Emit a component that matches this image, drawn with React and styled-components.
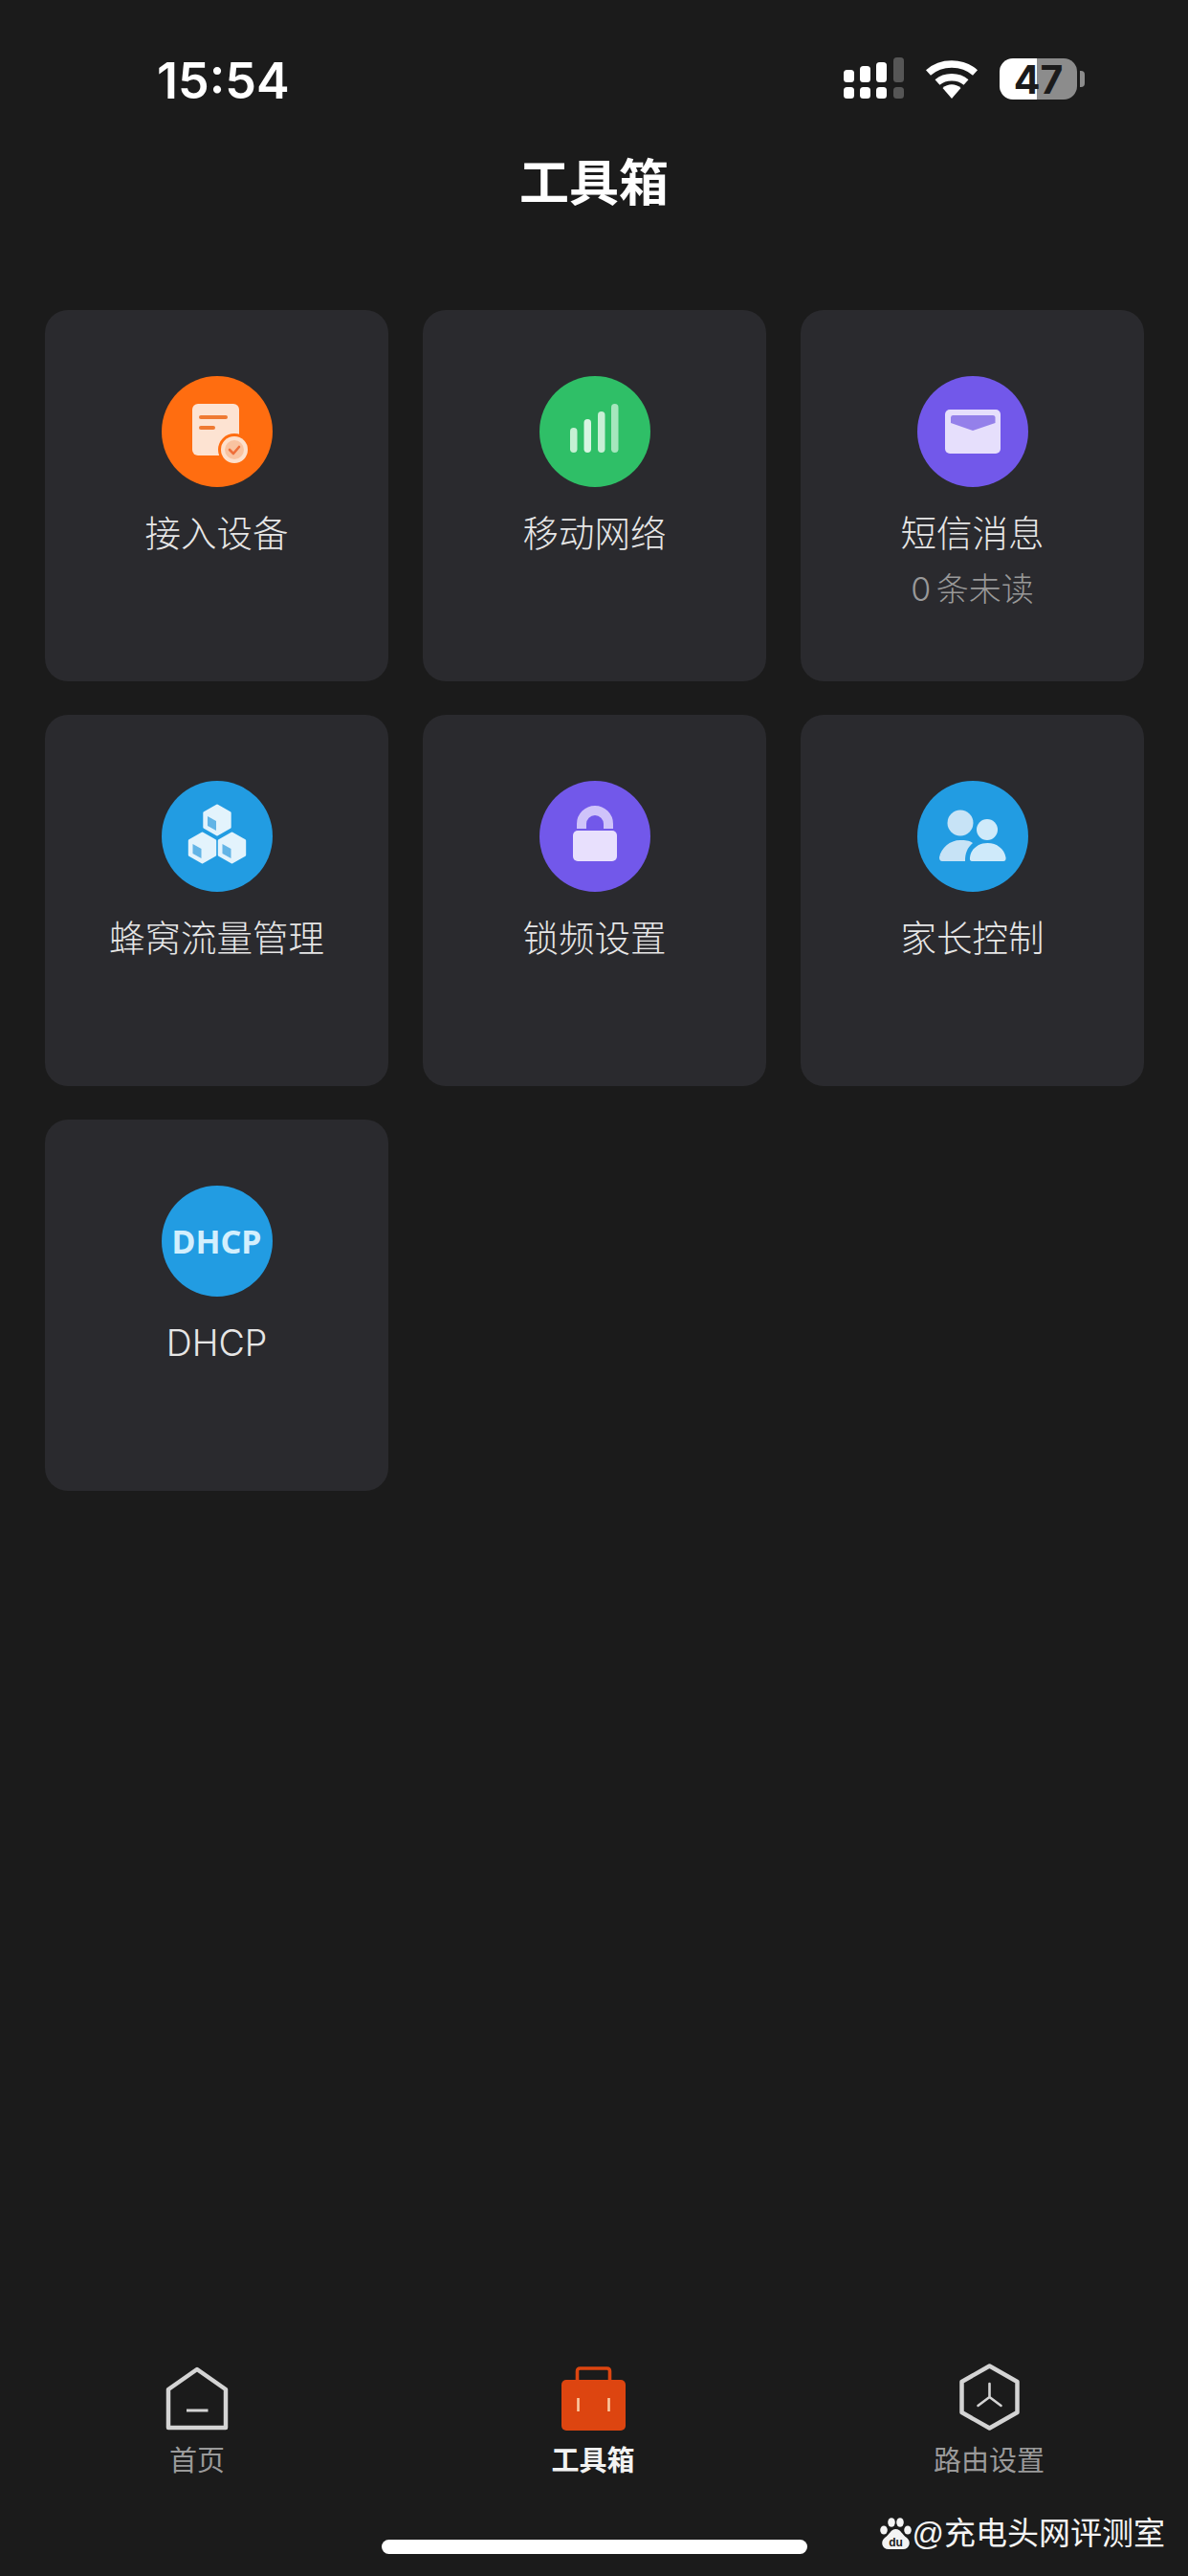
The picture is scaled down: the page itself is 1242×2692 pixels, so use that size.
import styled, { createGlobalStyle } from "styled-components";

const GlobalStyle = createGlobalStyle`
  html, body {
    margin: 0;
    padding: 0;
    background: #1b1b1b;
  }
`;

const FONT = `"Liberation Sans", "Noto Sans CJK SC", sans-serif`;

const Page = styled.div`
  position: relative;
  width: 1242px;
  height: 2692px;
  overflow: hidden;
  display: flex;
  flex-direction: column;
  background: #1b1b1b;
  font-family: ${FONT};
`;

const StatusBar = styled.div`
  display: flex;
  align-items: center;
  justify-content: space-between;
  height: 84px;
  margin-top: 42px;
  padding: 0 108px 0 164px;
`;

const Clock = styled.div`
  font-family: Inter, sans-serif;
  font-size: 52px;
  font-weight: 600;
  color: #fff;
`;

const StatusIcons = styled.div`
  display: flex;
  align-items: center;
  gap: 22px;
  margin-top: -3px;
`;

const Battery = styled.div`
  display: flex;
  align-items: center;
  justify-content: center;
  width: 81px;
  height: 43px;
  border-radius: 14px;
  background: linear-gradient(90deg, #fff 48%, #8c8c8c 48%);
  font-family: Inter, sans-serif;
  font-size: 41px;
  font-weight: 700;
  color: #1b1b1b;
`;

const BatteryWrap = styled.div`
  display: flex;
  align-items: center;
  gap: 3px;
`;

const BatteryNub = styled.div`
  width: 5px;
  height: 17px;
  border-radius: 0 4px 4px 0;
  background: #8c8c8c;
`;

const Title = styled.h1`
  margin: 33px 0 0;
  height: 66px;
  line-height: 66px;
  text-align: center;
  font-size: 52px;
  font-weight: 700;
  color: #fff;
`;

const Grid = styled.div`
  display: grid;
  grid-template-columns: repeat(3, 359px);
  grid-auto-rows: 388px;
  gap: 35px 36px;
  padding: 0 46px 0 47px;
  margin-top: 99px;
`;

const Card = styled.div`
  display: flex;
  flex-direction: column;
  align-items: center;
  padding-top: 69px;
  border-radius: 24px;
  background: #2a2a2e;
`;

const Circle = styled.div`
  display: flex;
  align-items: center;
  justify-content: center;
  width: 116px;
  height: 116px;
  border-radius: 50%;
  background: ${(props) => props.$color};
  color: #d3effd;
  font-family: "Noto Sans", sans-serif;
  font-size: 34px;
  font-weight: 700;
`;

const CardLabel = styled.div`
  margin-top: 26px;
  line-height: 46px;
  font-family: Inter, "Noto Sans CJK SC", sans-serif;
  font-size: 37.5px;
  font-weight: 300;
  color: #e6e6e6;
`;

const CardSub = styled.div`
  margin-top: 12px;
  line-height: 46px;
  font-family: Inter, "Noto Sans CJK SC", sans-serif;
  font-size: 34px;
  font-weight: 300;
  word-spacing: -4px;
  color: #999;
`;

const Spacer = styled.div`
  flex: 1;
`;

const TabBar = styled.div`
  display: grid;
  grid-template-columns: 412px 416px 412px;
`;

const Tab = styled.div`
  display: flex;
  flex-direction: column;
  align-items: center;
  gap: 15px;
`;

const TabIcon = styled.div`
  display: flex;
  align-items: flex-end;
  justify-content: center;
  height: 70px;
`;

const TabLabel = styled.div`
  line-height: 34px;
  font-size: 29px;
  font-weight: ${(props) => (props.$active ? 700 : 400)};
  color: ${(props) => (props.$active ? "#f2f2f2" : "#9a9a9a")};
`;

const HomeBar = styled.div`
  align-self: center;
  width: 445px;
  height: 15px;
  margin: 65px 0 23px;
  border-radius: 8px;
  background: #fff;
`;

const Watermark = styled.div`
  position: absolute;
  right: 24px;
  bottom: 22px;
  display: flex;
  align-items: center;
  gap: 1px;
  font-size: 33px;
  line-height: 44px;
  color: #f4f4f4;
`;

function SignalIcon() {
  const bars = [
    { x: 0, y: 18, h: 13, fill: "#fff" },
    { x: 17, y: 14, h: 17, fill: "#fff" },
    { x: 34, y: 10, h: 21, fill: "#fff" },
    { x: 52, y: 5, h: 26, fill: "#565656" },
  ];
  return (
    <svg width="63" height="45" viewBox="0 5 63 45">
      {bars.map((b) => (
        <g key={b.x} fill={b.fill}>
          <rect x={b.x} y={b.y} width="11" height={b.h} rx="3.5" />
          <rect x={b.x} y="36" width="11" height="12" rx="3.5" />
        </g>
      ))}
    </svg>
  );
}

function WifiIcon() {
  return (
    <svg width="56" height="42" viewBox="0 0 56 42" fill="none" stroke="#fff" strokeWidth="7.5">
      <path d="M3.5 14 C17 2 39 2 52.5 14" />
      <path d="M13 24 C21 17 35 17 43 24" />
      <path d="M18.5 30 L28 41 L37.5 30 C32 25 24 25 18.5 30 Z" fill="#fff" stroke="none" />
    </svg>
  );
}

function DeviceGlyph() {
  return (
    <svg width="116" height="116" viewBox="0 0 116 116">
      <rect x="32" y="29" width="49" height="54" rx="6" fill="#fde3d2" />
      <rect x="39" y="41" width="30" height="4" rx="2" fill="#ef7a32" />
      <rect x="39" y="52" width="17" height="4" rx="2" fill="#ef7a32" />
      <circle cx="76" cy="77" r="17" fill="#ff6d10" />
      <circle cx="76" cy="77" r="14" fill="#fde0cc" />
      <circle cx="76" cy="77" r="10" fill="#f9c3a0" />
      <path d="M71 77 L75 81 L81 74" fill="none" stroke="#ee6f3a" strokeWidth="2.6" strokeLinecap="round" strokeLinejoin="round" />
    </svg>
  );
}

function NetworkGlyph() {
  const bars = [
    { x: 32, y: 54, fill: "#c5f0d3" },
    { x: 46.5, y: 45, fill: "#d8f5e2" },
    { x: 61, y: 37, fill: "#c8efd5" },
    { x: 75, y: 29, fill: "#a5e6bd" },
  ];
  return (
    <svg width="116" height="116" viewBox="0 0 116 116">
      {bars.map((b) => (
        <rect key={b.x} x={b.x} y={b.y} width="7.5" height={80 - b.y} rx="3.7" fill={b.fill} />
      ))}
    </svg>
  );
}

function MailGlyph() {
  return (
    <svg width="116" height="116" viewBox="0 0 116 116">
      <rect x="29" y="35" width="58" height="46" rx="5" fill="#e6dffc" />
      <path d="M37 41 H79 Q81.5 41 81.5 43.5 V49 L58 57 L35 49 V43.5 Q35 41 37 41 Z" fill="#9480ea" />
    </svg>
  );
}

function Cube({ cx, cy }) {
  const r = 15;
  const w = r * 0.88;
  const points = [
    [cx, cy - r],
    [cx + w, cy - r / 2],
    [cx + w, cy + r / 2],
    [cx, cy + r],
    [cx - w, cy + r / 2],
    [cx - w, cy - r / 2],
  ]
    .map((p) => p.join(","))
    .join(" ");
  const face = `${cx - 10},${cy - 4} ${cx - 1},${cy + 1} ${cx - 1},${cy + 11} ${cx - 10},${cy + 6}`;
  return (
    <g>
      <polygon points={points} fill="#e3f3fc" stroke="#e3f3fc" strokeWidth="3" strokeLinejoin="round" />
      <polygon points={face} fill="#62b4e6" />
    </g>
  );
}

function CubesGlyph() {
  return (
    <svg width="116" height="116" viewBox="0 0 116 116">
      <Cube cx={58} cy={41} />
      <Cube cx={42.5} cy={70} />
      <Cube cx={73.5} cy={70} />
    </svg>
  );
}

function LockGlyph() {
  return (
    <svg width="116" height="116" viewBox="0 0 116 116">
      <path d="M44 50 V45 A14 14 0 0 1 72 45 V50" fill="none" stroke="#cfc3fa" strokeWidth="10" />
      <rect x="35" y="52" width="46" height="32" rx="5" fill="#e8e0fd" />
    </svg>
  );
}

function ParentsGlyph() {
  return (
    <svg width="116" height="116" viewBox="0 0 116 116">
      <circle cx="45" cy="44" r="13.5" fill="#c7e3f6" />
      <circle cx="73" cy="51" r="11" fill="#cfeafa" />
      <path d="M26 84 H50 C50 76 52 70 58 65 C54 62 50 62 45 62 C34 62 25 70 23 80 Q23 84 26 84 Z" fill="#c7e3f6" />
      <path d="M57 84 H90 Q93 84 92.5 80 C91 71 83 65 73.5 65 C64 65 56 71 55 80 Q54.5 84 57 84 Z" fill="#cfeafa" />
    </svg>
  );
}

function HomeTabIcon() {
  return (
    <svg width="66" height="67" viewBox="0 0 66 67" fill="none" stroke="#d4d4d4" strokeLinejoin="round">
      <path d="M33 3 L3 24 V64 H63 V24 Z" strokeWidth="4.5" />
      <path d="M22 46 H44.5" strokeWidth="3" />
    </svg>
  );
}

function ToolboxTabIcon() {
  return (
    <svg width="67" height="67" viewBox="0 0 67 67">
      <path d="M16.5 15 V5 Q16.5 2 19.5 2 H47.5 Q50.5 2 50.5 5 V15" fill="none" stroke="#dd4510" strokeWidth="3.6" />
      <rect x="0" y="14" width="67" height="53" rx="5" fill="#dd4510" />
      <path d="M17.5 33 V47 M49.5 33 V47" stroke="#fbc9a0" strokeWidth="2.6" />
    </svg>
  );
}

function RouterTabIcon() {
  return (
    <svg width="63" height="70" viewBox="0 0 63 70" fill="none" stroke="#d4d4d4" strokeLinejoin="round" strokeLinecap="round">
      <path d="M31.5 2.5 L60.5 19 V51 L31.5 67.5 L2.5 51 V19 Z" strokeWidth="4.5" />
      <path d="M31.5 21 V35 M31.5 35 L19.5 44 M31.5 35 L43.5 44" strokeWidth="2.6" />
    </svg>
  );
}

function PawIcon() {
  return (
    <svg width="33" height="34" viewBox="0 0 33 34" fill="#f4f4f4">
      <ellipse cx="4" cy="13" rx="3.8" ry="4.6" />
      <ellipse cx="12" cy="5" rx="3.8" ry="4.8" />
      <ellipse cx="21" cy="5" rx="3.8" ry="4.8" />
      <ellipse cx="29" cy="13" rx="3.8" ry="4.6" />
      <path d="M16.5 12 C22 12 23 18 28 21 C33 25 31 33 24 33 H9 C2 33 0 25 5 21 C10 18 11 12 16.5 12 Z" />
      <text x="16.5" y="30" textAnchor="middle" fontSize="12" fontWeight="700" fill="#1b1b1b" fontFamily="Liberation Sans, sans-serif">
        du
      </text>
    </svg>
  );
}

const TOOLS = [
  { label: "接入设备", color: "#ff6d10", icon: <DeviceGlyph /> },
  { label: "移动网络", color: "#2fbf67", icon: <NetworkGlyph /> },
  { label: "短信消息", sub: "0 条未读", color: "#7258ea", icon: <MailGlyph /> },
  { label: "蜂窝流量管理", color: "#229ce2", icon: <CubesGlyph /> },
  { label: "锁频设置", color: "#7258ea", icon: <LockGlyph /> },
  { label: "家长控制", color: "#229ce2", icon: <ParentsGlyph /> },
  { label: "DHCP", color: "#229ce2", icon: "DHCP" },
];

export default function App() {
  return (
    <Page>
      <GlobalStyle />
      <StatusBar>
        <Clock>15:54</Clock>
        <StatusIcons>
          <SignalIcon />
          <WifiIcon />
          <BatteryWrap>
            <Battery>47</Battery>
            <BatteryNub />
          </BatteryWrap>
        </StatusIcons>
      </StatusBar>
      <Title>工具箱</Title>
      <Grid>
        {TOOLS.map((tool) => (
          <Card key={tool.label}>
            <Circle $color={tool.color}>{tool.icon}</Circle>
            <CardLabel>{tool.label}</CardLabel>
            {tool.sub && <CardSub>{tool.sub}</CardSub>}
          </Card>
        ))}
      </Grid>
      <Spacer />
      <TabBar>
        <Tab>
          <TabIcon>
            <HomeTabIcon />
          </TabIcon>
          <TabLabel>首页</TabLabel>
        </Tab>
        <Tab>
          <TabIcon>
            <ToolboxTabIcon />
          </TabIcon>
          <TabLabel $active>工具箱</TabLabel>
        </Tab>
        <Tab>
          <TabIcon>
            <RouterTabIcon />
          </TabIcon>
          <TabLabel>路由设置</TabLabel>
        </Tab>
      </TabBar>
      <HomeBar />
      <Watermark>
        <PawIcon />
        @充电头网评测室
      </Watermark>
    </Page>
  );
}
